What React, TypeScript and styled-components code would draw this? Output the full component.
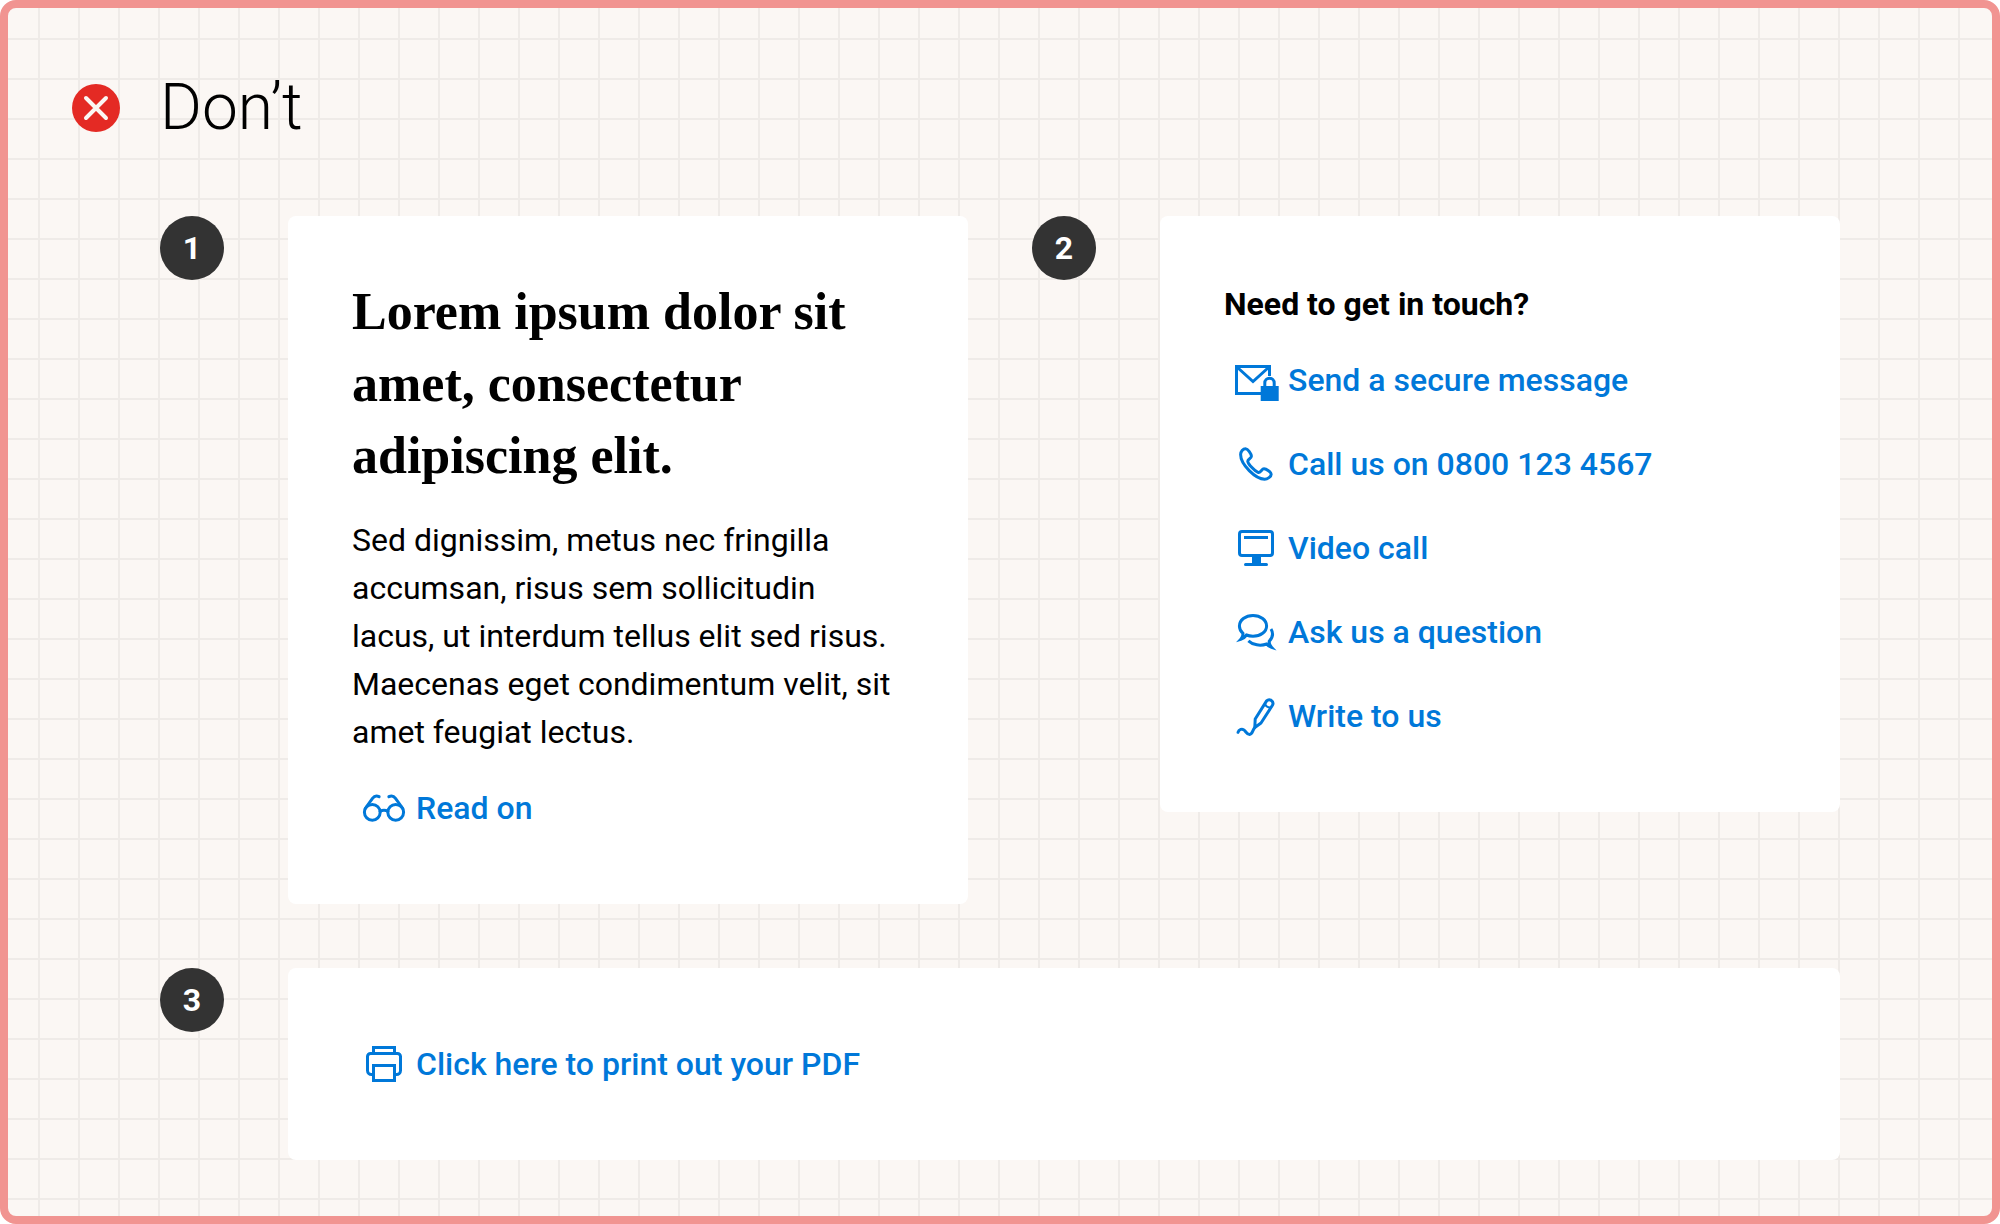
import React from 'react';
import styled, { createGlobalStyle } from 'styled-components';

const color = {
  frame: '#f19491',
  paper: '#fbf7f4',
  line: '#efebe8',
  link: '#0078d9',
  dark: '#333333',
  danger: '#e42a24',
};

const GlobalStyle = createGlobalStyle`
  *, *::before, *::after { box-sizing: border-box; }
  body {
    margin: 0;
    background: #ffffff;
    color: #000000;
    font-family: Roboto, "Liberation Sans", sans-serif;
    font-size: 32px;
    line-height: 48px;
  }
`;

const Board = styled.main`
  min-height: 100vh;
  padding: 56px 152px 56px 64px;
  border: 8px solid ${color.frame};
  border-radius: 16px;
  background-color: ${color.paper};
  background-image:
    linear-gradient(to right, transparent 38px, ${color.line} 38px),
    linear-gradient(to bottom, transparent 38px, ${color.line} 38px);
  background-size: 40px 40px;
  background-origin: border-box;
`;

const Header = styled.header`
  display: flex;
  align-items: center;
  gap: 40px;
  margin-bottom: 64px;
`;

const Verdict = styled.h1`
  margin: 0;
  font-size: 64px;
  font-weight: 300;
  line-height: 88px;
`;

const StatusIcon = styled.svg`
  flex: none;
  width: 48px;
  height: 48px;
`;

const Examples = styled.div`
  display: grid;
  grid-template-columns: repeat(2, minmax(0, 1fr));
  gap: 64px;
  align-items: start;
  padding-left: 88px;
`;

const Example = styled.section<{ $wide?: boolean }>`
  display: grid;
  grid-template-columns: 64px minmax(0, 1fr);
  gap: 64px;
  align-items: start;
  grid-column: ${(p) => (p.$wide ? '1 / -1' : 'auto')};
`;

const Badge = styled.span`
  display: flex;
  align-items: center;
  justify-content: center;
  height: 64px;
  border-radius: 50%;
  background: ${color.dark};
  color: #ffffff;
  font-weight: 700;
`;

const Card = styled.article<{ $article?: boolean }>`
  padding: ${(p) => (p.$article ? '60px 64px 64px' : '64px')};
  border-radius: 8px;
  background: #ffffff;
`;

const Headline = styled.h2`
  margin: 0 0 24px;
  font-family: "Liberation Serif", serif;
  font-size: 52px;
  font-weight: 700;
  line-height: 72px;
`;

const Subhead = styled.h2`
  margin: 0 0 20px;
  font-size: 32px;
  font-weight: 700;
  line-height: 48px;
`;

const Copy = styled.p`
  margin: 0 0 20px;
`;

const LinkList = styled.ul`
  display: flex;
  flex-direction: column;
  gap: 20px;
  margin: 0;
  padding: 0;
  list-style: none;
`;

const ActionLink = styled.a`
  display: flex;
  align-items: center;
  width: fit-content;
  color: ${color.link};
  font-weight: 500;
  text-decoration: none;
`;

const LinkIcon = styled.svg`
  flex: none;
  width: 64px;
  height: 64px;
  fill: none;
  stroke: currentColor;
  stroke-width: 3;
`;

type ActionProps = { label: string; children: React.ReactNode };

const Action = ({ label, children }: ActionProps) => (
  <ActionLink href="#">
    <LinkIcon viewBox="0 0 64 64" aria-hidden="true">
      {children}
    </LinkIcon>
    {label}
  </ActionLink>
);

const glasses = (
  <g strokeLinecap="round">
    <circle cx="20.3" cy="36.3" r="7.9" />
    <circle cx="43.7" cy="36.3" r="7.9" />
    <path d="M28 35.3q4-2 8 0M13.2 32.5 20.5 22.3q2.7-3.6 6.6-1.6M50.8 32.5 43.5 22.3q-2.7-3.6-6.6-1.6" />
  </g>
);

const secureMail = (
  <>
    <path d="M37 45.5H12.5v-27h33V28" />
    <path d="m13.5 19.5 15.5 14 15.5-14" />
    <path d="M40.8 39v-4a4.7 4.7 0 0 1 9.4 0v4" />
    <path d="M36.700 38h18v15h-18z" fill="currentColor" stroke="none" />
  </>
);

const phone = (
  <path
    strokeLinejoin="round"
    d="M16.600 22.600c0-3 2.400-5.800 5-5.800 2.400 0 5.600 5.200 5.800 7.400.2 2.300-4 2.800-3.600 5.200.4 2.600 6.600 9.600 10.200 11 2.500.9 3.600-3.600 6-3.600 2.300 0 7.200 3.200 7.200 5.400 0 2.400-3.700 5-6.600 5C31.600 47.200 16.600 32.600 16.600 22.600Z"
  />
);

const monitor = (
  <>
    <rect x="15.5" y="15.5" width="33" height="24" rx="2.5" />
    <path d="M20 21.5h24" />
    <path d="M28 40h9v8h-9z" fill="currentColor" stroke="none" />
    <path d="M21.5 48.5h21" strokeLinecap="round" />
  </>
);

const chat = (
  <>
    <path d="M19 33.4C16.800 31.500 15.400 28.900 15.400 26c0-5.900 6-10.600 13.600-10.600S42.600 20.100 42.600 26 36.600 36.200 29 36.200c-2.300 0-4.600-.4-6.500-1.200-1.600 2.200-3.200 3.600-5.700 4.300 1.600-1.700 2.200-3.700 2.200-5.900Z" />
    <path d="M47 29c3 5 1.400 9-1.800 12.400 0 2.300.7 4.200 2.300 5.900-1.900-.6-3.600-1.700-4.800-3.300-6.500 2.300-13.800 1-18.300-3.200" />
  </>
);

const pen = (
  <g strokeLinecap="round" strokeLinejoin="round">
    <path d="M42.600 16.900a3.700 3.700 0 0 1 6 4.100L37 39l-6.200 4.500.4-8.500Z" />
    <path d="M41 20.200q2 3.800 6 3.200" strokeWidth="2" />
    <path d="M14 48.400c.8-3 4.300-4.300 6.400-2.100 1.900 1.900 2.800 4.300 5.200 4.200 3-.2 2.900-4.500 5.200-7" />
  </g>
);

const printer = (
  <>
    <path d="M21.5 21v-5.5h21V21" />
    <path d="M21 42.5h-1.500a4 4 0 0 1-4-4V24.500a3 3 0 0 1 3-3h27a3 3 0 0 1 3 3v14a4 4 0 0 1-4 4H43" />
    <path d="M21.5 33.5h21v15h-21z" />
  </>
);

const contactOptions = [
  { label: 'Send a secure message', icon: secureMail },
  { label: 'Call us on 0800 123 4567', icon: phone },
  { label: 'Video call', icon: monitor },
  { label: 'Ask us a question', icon: chat },
  { label: 'Write to us', icon: pen },
];

export default function App() {
  return (
    <>
      <GlobalStyle />
      <Board>
        <Header>
          <StatusIcon viewBox="0 0 48 48" aria-hidden="true">
            <circle cx="24" cy="24" r="24" fill={color.danger} />
            <path
              d="m14 14 20 20M34 14 14 34"
              stroke={color.paper}
              strokeWidth="4"
              strokeLinecap="round"
            />
          </StatusIcon>
          <Verdict>Don’t</Verdict>
        </Header>

        <Examples>
          <Example>
            <Badge>1</Badge>
            <Card $article>
              <Headline>Lorem ipsum dolor sit amet, consectetur adipiscing elit.</Headline>
              <Copy>
                Sed dignissim, metus nec fringilla accumsan, risus sem sollicitudin lacus, ut
                interdum tellus elit sed risus. Maecenas eget condimentum velit, sit amet feugiat
                lectus.
              </Copy>
              <Action label="Read on">{glasses}</Action>
            </Card>
          </Example>

          <Example>
            <Badge>2</Badge>
            <Card>
              <Subhead>Need to get in touch?</Subhead>
              <LinkList>
                {contactOptions.map(({ label, icon }) => (
                  <li key={label}>
                    <Action label={label}>{icon}</Action>
                  </li>
                ))}
              </LinkList>
            </Card>
          </Example>

          <Example $wide>
            <Badge>3</Badge>
            <Card>
              <Action label="Click here to print out your PDF">{printer}</Action>
            </Card>
          </Example>
        </Examples>
      </Board>
    </>
  );
}
